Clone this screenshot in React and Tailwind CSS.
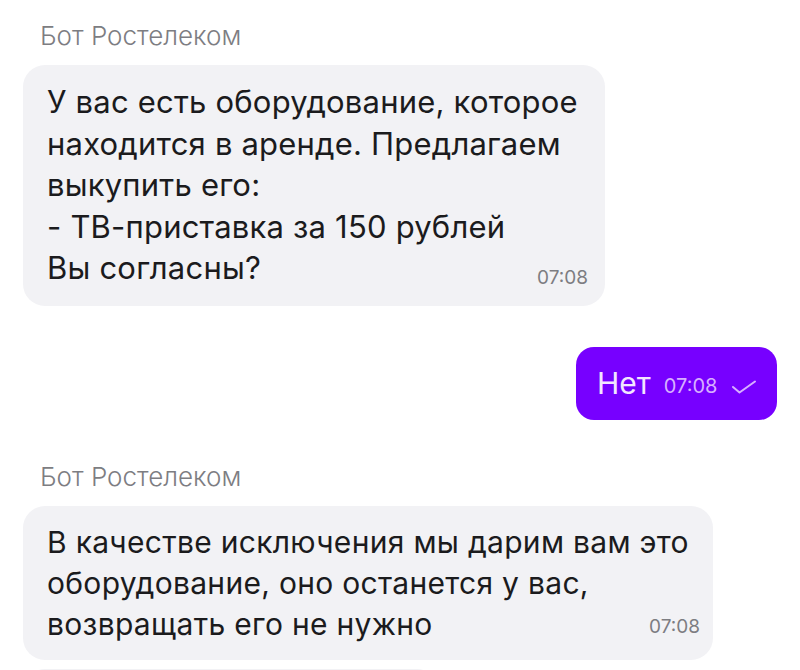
import React from "react";

const body = { fontFamily: "Inter, 'Noto Sans', sans-serif" };
const meta = { fontFamily: "Inter, 'Noto Sans', sans-serif" };

function Label({ children }) {
  return (
    <div
      className="pl-[40px] text-[26px] leading-[30px] text-[#7d7d82] font-light"
      style={meta}
    >
      {children}
    </div>
  );
}

function Time({ children, className = "" }) {
  return (
    <span
      className={"leading-[22px] whitespace-nowrap " + className}
      style={meta}
    >
      {children}
    </span>
  );
}

export default function App() {
  return (
    <div className="w-[800px] h-[670px] overflow-hidden bg-white">
      <div className="flex flex-col pt-[21px]">
        <Label>Бот Ростелеком</Label>
        <div className="mt-[14px] ml-[23px] w-[582px] rounded-[22px] bg-[#f2f2f5] pl-[24px] pr-[17px] pt-[16px] pb-[17px] grid">
          <div
            className="[grid-area:1/1] text-[31px] tracking-[0.2px] leading-[41.5px] text-[#1b1b1d] whitespace-nowrap"
            style={body}
          >
            У вас есть оборудование, которое
            <br />
            находится в аренде. Предлагаем
            <br />
            выкупить его:
            <br />- ТВ-приставка за 150 рублей
            <br />
            Вы согласны?
          </div>
          <Time className="[grid-area:1/1] self-end justify-self-end text-[19px] text-[#7d7d82]">
            07:08
          </Time>
        </div>

        <div className="mt-[41px] self-end mr-[23px] w-[201px] h-[73px] rounded-[18px] bg-[#7700ff] flex items-center pl-[21px] pr-[16px]">
          <span
            className="text-[30px] leading-[36px] text-[#f3e6ff]"
            style={body}
          >
            Нет
          </span>
          <Time className="ml-[13px] mt-[6px] text-[20px] text-[#d7b0ff]">
            07:08
          </Time>
          <svg
            className="ml-[14px] mt-[8px]"
            width="26"
            height="14"
            viewBox="0 0 26 14"
            fill="none"
          >
            <path
              d="M2 7 L8.5 12.5 L24 1.5"
              stroke="#d7b0ff"
              strokeWidth="2"
              strokeLinecap="round"
              strokeLinejoin="round"
            />
          </svg>
        </div>

        <div className="mt-[42px]">
          <Label>Бот Ростелеком</Label>
        </div>
        <div className="mt-[14px] ml-[23px] w-[690px] rounded-[22px] bg-[#f2f2f5] pl-[24px] pr-[13px] pt-[16px] pb-[15px] grid">
          <div
            className="[grid-area:1/1] text-[30px] tracking-[0.3px] leading-[41px] text-[#1b1b1d] whitespace-nowrap"
            style={body}
          >
            В качестве исключения мы дарим вам это
            <br />
            оборудование, оно останется у вас,
            <br />
            возвращать его не нужно
          </div>
          <Time className="[grid-area:1/1] self-end justify-self-end text-[19px] text-[#7d7d82] mb-[7px]">
            07:08
          </Time>
        </div>
        <div className="mt-[9px] ml-[25px] w-[412px] h-[30px] rounded-t-[20px] bg-[#f2f2f5]" />
      </div>
    </div>
  );
}
